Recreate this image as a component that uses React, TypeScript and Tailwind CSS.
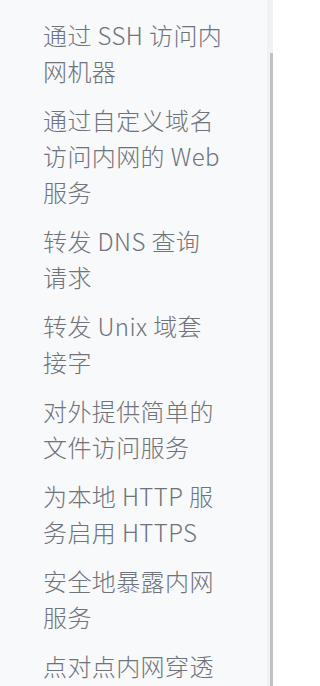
import React from "react";

const items: string[][] = [
  ["通过 SSH 访问内", "网机器"],
  ["通过自定义域名", "访问内网的 Web", "服务"],
  ["转发 DNS 查询", "请求"],
  ["转发 Unix 域套", "接字"],
  ["对外提供简单的", "文件访问服务"],
  ["为本地 HTTP 服", "务启用 HTTPS"],
  ["安全地暴露内网", "服务"],
  ["点对点内网穿透"],
];

export default function App() {
  return (
    <div
      className="flex h-[686px] w-[273px] overflow-hidden bg-[#f8f9fb]"
      style={{ fontFamily: '"Noto Sans CJK SC", sans-serif' }}
    >
      <div className="flex-1 pl-[43px] pt-[17px]">
        <ul className="flex flex-col gap-[13px]">
          {items.map((lines) => (
            <li
              key={lines.join("")}
              className="text-[24px] font-light leading-[36px] tracking-[0.4px] text-[#6f737a]"
            >
              {lines.map((l, i) => (
                <span key={i} className="block whitespace-nowrap">
                  {l}
                </span>
              ))}
            </li>
          ))}
        </ul>
      </div>
      <div className="flex w-[6px] flex-col bg-[#f1f1f1]">
        <div className="mt-[53px] ml-[3px] flex-1 bg-[#c1c1c1]" />
      </div>
    </div>
  );
}
